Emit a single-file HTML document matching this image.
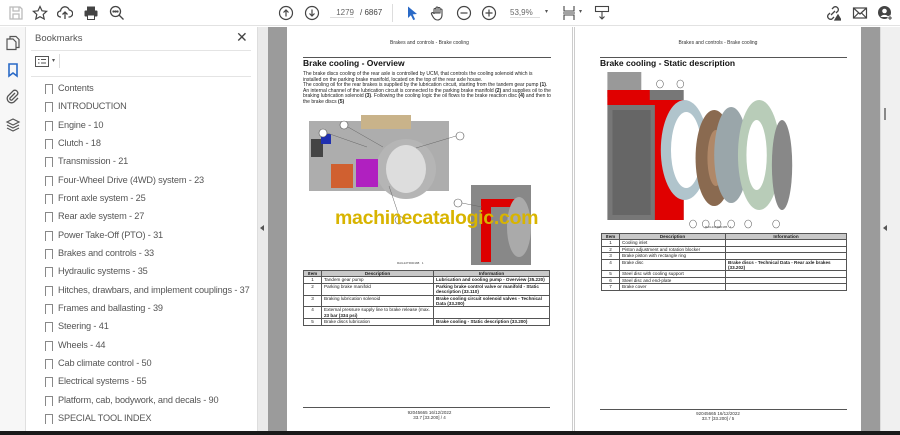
<!DOCTYPE html><html><head><meta charset="utf-8"><style>
*{margin:0;padding:0;box-sizing:border-box}
body{width:900px;height:435px;overflow:hidden;background:#fff;font-family:"Liberation Sans",sans-serif;position:relative}
.abs{position:absolute}
.tb{left:0;top:0;width:900px;height:26px;background:#fff;border-bottom:1px solid #e2e2e2}
.ic{position:absolute;top:5px;width:16px;height:16px}
.rail{left:0;top:27px;width:26px;height:404px;background:#f7f7f7;border-right:1px solid #e0e0e0}
.panel{left:26px;top:27px;width:231px;height:404px;background:#fff}
.bm{position:absolute;left:32px;font-size:9.2px;letter-spacing:-0.15px;color:#555;white-space:nowrap}
.bm:before{content:"";position:absolute;left:-13px;top:1px;width:6px;height:9px;border:1.3px solid #888;border-bottom:none;}
.page{background:#fff;top:27px;height:404px}
.hd{font-size:5px;color:#333;text-align:center;position:absolute;width:100%}
.t{font-size:5px;color:#222;line-height:5.6px}
table{border-collapse:collapse;font-size:4.6px;color:#222}
td,th{border:0.8px solid #555;padding:0 2px;vertical-align:top;line-height:5.4px}
th{background:#c8c8c8}
</style></head><body>
<div class="abs tb">
<svg class="ic" style="left:8px" viewBox="0 0 16 16" fill="none" stroke="#bbb" stroke-width="1.3"><path d="M2 2h10l2 2v10H2z M5 2v4h6V2 M5 14v-5h6v5"/></svg>
<svg class="ic" style="left:32px" viewBox="0 0 16 16" fill="none" stroke="#444" stroke-width="1.2"><path d="M8 1.5l2 4.3 4.6.5-3.4 3.1 1 4.6L8 11.7 3.8 14l1-4.6L1.4 6.3 6 5.8z"/></svg>
<svg class="ic" style="left:57px" viewBox="0 0 16 16" fill="none" stroke="#444" stroke-width="1.3"><path d="M4 12H3.5a3 3 0 0 1 0-6 4.5 4.5 0 0 1 8.8-1A3.5 3.5 0 0 1 12 12h-0.5 M8 14V7 M5.5 9.5L8 7l2.5 2.5"/></svg>
<svg class="ic" style="left:83px" viewBox="0 0 16 16" fill="#444"><rect x="4" y="1.5" width="8" height="4"/><rect x="1.5" y="5.5" width="13" height="6" rx="1"/><rect x="4.5" y="10" width="7" height="4.5" fill="#fff" stroke="#444"/></svg>
<svg class="ic" style="left:109px" viewBox="0 0 16 16" fill="none" stroke="#444" stroke-width="1.3"><circle cx="6.5" cy="6.5" r="5"/><path d="M10 10l4.5 4.5"/><circle cx="4.5" cy="6.5" r=".5"/><circle cx="6.5" cy="6.5" r=".5"/><circle cx="8.5" cy="6.5" r=".5"/></svg>
<svg class="ic" style="left:278px" viewBox="0 0 16 16" fill="none" stroke="#444" stroke-width="1.2"><circle cx="8" cy="8" r="6.5"/><path d="M8 11.5V5 M5.5 7.5L8 5l2.5 2.5"/></svg>
<svg class="ic" style="left:304px" viewBox="0 0 16 16" fill="none" stroke="#444" stroke-width="1.2"><circle cx="8" cy="8" r="6.5"/><path d="M8 4.5V11 M5.5 8.5L8 11l2.5-2.5"/></svg>
<div class="abs" style="left:330px;top:8px;width:24px;font-size:8px;color:#666;text-align:right;border-bottom:1px solid #ddd">1279</div>
<div class="abs" style="left:360px;top:8px;font-size:8px;color:#444">/ 6867</div>
<div class="abs" style="left:392px;top:4px;width:1px;height:18px;background:#ddd"></div>
<svg class="ic" style="left:404px" viewBox="0 0 16 16"><path d="M4 1.5l9 7.5-4.3.4 2.4 4.8-1.8.9-2.4-4.9L4 13z" fill="#2a6ac7"/></svg>
<svg class="ic" style="left:430px" viewBox="0 0 16 16" fill="none" stroke="#444" stroke-width="1.1"><path d="M4 9V4.5a1 1 0 0 1 2 0V8 M6 8V3a1 1 0 0 1 2 0v5 M8 8V3.5a1 1 0 0 1 2 0V8 M10 8V5a1 1 0 0 1 2 0v5c0 3-2 5-4.5 5S3.5 13 2.5 11l-1-2a1 1 0 0 1 1.7-1z"/></svg>
<svg class="ic" style="left:456px" viewBox="0 0 16 16" fill="none" stroke="#444" stroke-width="1.2"><circle cx="8" cy="8" r="6.5"/><path d="M4.5 8h7"/></svg>
<svg class="ic" style="left:481px" viewBox="0 0 16 16" fill="none" stroke="#444" stroke-width="1.2"><circle cx="8" cy="8" r="6.5"/><path d="M4.5 8h7 M8 4.5v7"/></svg>
<div class="abs" style="left:510px;top:8px;width:30px;font-size:8px;color:#666;border-bottom:1px solid #ddd">53,9%</div>
<div class="abs" style="left:545px;top:8px;font-size:6px;color:#555">▾</div>
<svg class="ic" style="left:562px" viewBox="0 0 16 16" fill="none" stroke="#444" stroke-width="1.1"><path d="M2 1v5h10V1 M2 15v-5h10v5 M1 8h12"/></svg>
<div class="abs" style="left:579px;top:8px;font-size:6px;color:#555">▾</div>
<svg class="ic" style="left:594px" viewBox="0 0 16 16" fill="none" stroke="#444" stroke-width="1.1"><rect x="1.5" y="1.5" width="13" height="5"/><path d="M8 7v7 M5.5 11.5L8 14l2.5-2.5"/></svg>
<svg class="ic" style="left:825px" viewBox="0 0 16 16" fill="none" stroke="#444" stroke-width="1.3"><path d="M6 10l4-4 M7 4l2-2a3 3 0 0 1 4 4l-2 2 M9 12l-2 2a3 3 0 0 1-4-4l2-2"/><path d="M10 15l3-5 3 5z" fill="#444"/></svg>
<svg class="ic" style="left:852px" viewBox="0 0 16 16" fill="none" stroke="#444" stroke-width="1.2"><rect x="1.5" y="3" width="13" height="10"/><path d="M1.5 3l6.5 6 6.5-6 M1.5 13l5-5 M14.5 13l-5-5"/></svg>
<svg class="ic" style="left:877px" viewBox="0 0 16 16"><circle cx="7.5" cy="7.5" r="6.5" fill="#444"/><circle cx="7.5" cy="6" r="2.3" fill="#fff"/><path d="M3.5 12a4.5 4 0 0 1 8 0" fill="#fff"/><circle cx="13" cy="13" r="2.5" fill="#fff"/><path d="M13 11v4M11 13h4" stroke="#444"/></svg>
</div>
<div class="abs rail">
<svg class="abs" style="left:5px;top:8px" width="16" height="16" viewBox="0 0 16 16" fill="none" stroke="#555" stroke-width="1.2"><path d="M5 4V1.5h6l3 3v8H11 M2 4h6l3 3v7.5H2z"/></svg>
<svg class="abs" style="left:5px;top:35px" width="16" height="16" viewBox="0 0 16 16" fill="none" stroke="#2a6ac7" stroke-width="1.6"><path d="M4 2h8v12l-4-3-4 3z"/></svg>
<svg class="abs" style="left:5px;top:62px" width="16" height="16" viewBox="0 0 16 16" fill="none" stroke="#555" stroke-width="1.3"><path d="M10 4L5 9a1.5 1.5 0 0 0 2 2l5.5-5.5a3 3 0 0 0-4-4L3 7a4.3 4.3 0 0 0 6 6l4-4"/></svg>
<svg class="abs" style="left:5px;top:90px" width="16" height="16" viewBox="0 0 16 16" fill="none" stroke="#555" stroke-width="1.2"><path d="M8 2l6 3-6 3-6-3z M2 8l6 3 6-3 M2 11l6 3 6-3"/></svg>
</div>
<div class="abs panel">
<div class="abs" style="left:9px;top:6px;font-size:9.5px;color:#555">Bookmarks</div>
<div class="abs" style="left:210px;top:2px;font-size:14px;color:#444">✕</div>
<div class="abs" style="left:5px;top:23px;width:220px;height:1px;background:#e4e4e4"></div>
<svg class="abs" style="left:9px;top:29px" width="14" height="11" viewBox="0 0 14 11" fill="none" stroke="#555"><rect x=".5" y=".5" width="13" height="10"/><path d="M3 3.5h1.5M6 3.5h5M3 7h1.5M6 7h5"/></svg>
<div class="abs" style="left:26px;top:30px;font-size:6px;color:#555">▾</div>
<div class="abs" style="left:33px;top:27px;width:1px;height:14px;background:#ddd"></div>
<div class="abs" style="left:5px;top:49px;width:220px;height:1px;background:#e4e4e4"></div>
<div class="bm" style="top:56px">Contents</div>
<div class="bm" style="top:74px">INTRODUCTION</div>
<div class="bm" style="top:92.5px">Engine - 10</div>
<div class="bm" style="top:111px">Clutch - 18</div>
<div class="bm" style="top:129px">Transmission - 21</div>
<div class="bm" style="top:147.5px">Four-Wheel Drive (4WD) system - 23</div>
<div class="bm" style="top:166px">Front axle system - 25</div>
<div class="bm" style="top:184px">Rear axle system - 27</div>
<div class="bm" style="top:202.5px">Power Take-Off (PTO) - 31</div>
<div class="bm" style="top:221px">Brakes and controls - 33</div>
<div class="bm" style="top:239px">Hydraulic systems - 35</div>
<div class="bm" style="top:257.5px">Hitches, drawbars, and implement couplings - 37</div>
<div class="bm" style="top:276px">Frames and ballasting - 39</div>
<div class="bm" style="top:294px">Steering - 41</div>
<div class="bm" style="top:312.5px">Wheels - 44</div>
<div class="bm" style="top:331px">Cab climate control - 50</div>
<div class="bm" style="top:349px">Electrical systems - 55</div>
<div class="bm" style="top:367.5px">Platform, cab, bodywork, and decals - 90</div>
<div class="bm" style="top:386px">SPECIAL TOOL INDEX</div>
</div>
<div class="abs" style="left:257px;top:27px;width:11px;height:404px;background:#eaeaea;border-left:1px solid #ddd"></div>
<div class="abs" style="left:260px;top:225px;width:0;height:0;border-right:4px solid #555;border-top:3px solid transparent;border-bottom:3px solid transparent"></div>
<div class="abs" style="left:268px;top:27px;width:19px;height:404px;background:#9b9b9b"></div>
<div class="abs" style="left:861px;top:27px;width:19px;height:404px;background:#9b9b9b"></div>
<div class="abs" style="left:880px;top:27px;width:20px;height:404px;background:#f0f0f0;border-left:1px solid #ddd"></div>
<div class="abs" style="left:883px;top:225px;width:0;height:0;border-right:4px solid #555;border-top:3px solid transparent;border-bottom:3px solid transparent"></div>
<div class="abs" style="left:884px;top:108px;width:1.5px;height:12px;background:#888"></div>

<!-- page 1 -->
<div class="abs page" style="left:287px;width:286px;border-right:1px solid #ccc">
<div class="hd" style="top:13px">Brakes and controls - Brake cooling</div>
<div class="abs" style="left:16px;top:30px;width:248px;height:1px;background:#555"></div>
<div class="abs" style="left:16px;top:31px;font-size:8.5px;font-weight:bold;color:#111">Brake cooling - Overview</div>
<div class="abs t" style="left:16px;top:45px;width:248px">The brake discs cooling of the rear axle is controlled by UCM, that controls the cooling solenoid which is installed on the parking brake manifold, located on the top of the rear axle house.<br>The cooling oil for the rear brakes is supplied by the lubrication circuit, starting from the tandem gear pump <b>(1)</b>. An internal channel of the lubrication circuit is connected to the parking brake manifold <b>(2)</b> and supplies oil to the braking lubrication solenoid <b>(3)</b>. Following the cooling logic the oil flows to the brake reaction disc <b>(4)</b> and then to the brake discs <b>(5)</b></div>
<svg class="abs" style="left:14px;top:82px" width="256" height="160" viewBox="0 0 256 160">
<rect x="8" y="12" width="140" height="70" fill="#8a8a8a" opacity=".7"/>
<rect x="60" y="6" width="50" height="14" fill="#c9b38a"/>
<ellipse cx="105" cy="60" rx="30" ry="30" fill="#b5b5b5"/><ellipse cx="105" cy="60" rx="20" ry="24" fill="#ddd"/>
<rect x="55" y="50" width="22" height="28" fill="#b020c0"/>
<rect x="30" y="55" width="22" height="24" fill="#d06030"/>
<rect x="10" y="30" width="12" height="18" fill="#444"/>
<rect x="20" y="25" width="10" height="10" fill="#2030b0"/>
<rect x="170" y="76" width="60" height="80" fill="#888"/>
<path d="M180 90h40v8h-30v55h-10z" fill="#d00"/>
<ellipse cx="218" cy="118" rx="12" ry="30" fill="#aaa"/>
<g fill="#fff" stroke="#555" stroke-width=".6"><circle cx="22" cy="24" r="4"/><circle cx="43" cy="16" r="4"/><circle cx="159" cy="27" r="4"/><circle cx="157" cy="94" r="4"/><circle cx="98" cy="111" r="4"/></g>
<g stroke="#666" stroke-width=".5"><path d="M26 24l40 14M47 18l35 20M155 27l-40 12M161 94l20 4M98 107l-10-30"/></g>
</svg>
<div class="abs" style="left:48px;top:180px;font-size:19.5px;font-weight:bold;color:#d8b400;letter-spacing:-.3px">machinecatalogic.com</div>
<div class="abs" style="left:110px;top:234px;font-size:3px;color:#444">RAIL22TR00188 &nbsp; 1</div>
<table class="abs" style="left:16px;top:243px;width:247px">
<tr><th style="width:18px">Item</th><th style="width:112px">Description</th><th>Information</th></tr>
<tr><td style="text-align:center">1</td><td>Tandem gear pump</td><td><b>Lubrication and cooling pump - Overview (35.220)</b></td></tr>
<tr><td style="text-align:center">2</td><td>Parking brake manifold</td><td><b>Parking brake control valve or manifold - Static description (33.110)</b></td></tr>
<tr><td style="text-align:center">3</td><td>Braking lubrication solenoid</td><td><b>Brake cooling circuit solenoid valves - Technical Data (33.200)</b></td></tr>
<tr><td style="text-align:center">4</td><td>External pressure supply line to brake release (max. <b>23 bar (334 psi)</b></td><td></td></tr>
<tr><td style="text-align:center">5</td><td>Brake discs lubrication</td><td><b>Brake cooling - Static description (33.200)</b></td></tr>
</table>
<div class="abs" style="left:16px;top:380px;width:247px;height:1px;background:#555"></div>
<div class="hd" style="top:383px;font-size:4.5px">92045665 16/12/2022<br>33.7 [33.200] / 4</div>
</div>

<!-- page 2 -->
<div class="abs page" style="left:574px;width:287px;border-left:1px solid #ccc">
<div class="hd" style="top:13px">Brakes and controls - Brake cooling</div>
<div class="abs" style="left:25px;top:30px;width:247px;height:1px;background:#555"></div>
<div class="abs" style="left:25px;top:31px;font-size:8.5px;font-weight:bold;color:#111">Brake cooling - Static description</div>
<svg class="abs" style="left:29px;top:43px" width="195" height="160" viewBox="0 0 230 160" preserveAspectRatio="none">
<rect x="4" y="2" width="40" height="25" fill="#999"/>
<rect x="4" y="20" width="90" height="130" fill="#777"/>
<path d="M4 20h50v10h40v120H60V35H4z" fill="#e00000"/>
<rect x="10" y="40" width="45" height="105" fill="#666"/>
<ellipse cx="95" cy="80" rx="28" ry="50" fill="#b0c4cc"/><ellipse cx="97" cy="80" rx="18" ry="38" fill="#fff"/>
<ellipse cx="130" cy="88" rx="22" ry="48" fill="#8a6a50"/><ellipse cx="132" cy="88" rx="10" ry="28" fill="#b08868"/>
<ellipse cx="150" cy="85" rx="20" ry="48" fill="#9aa6aa"/>
<ellipse cx="183" cy="85" rx="25" ry="55" fill="#b8ccb8"/><ellipse cx="180" cy="85" rx="12" ry="35" fill="#fff"/>
<ellipse cx="210" cy="95" rx="12" ry="45" fill="#888"/>
<g fill="#fff" stroke="#555" stroke-width=".6"><circle cx="66" cy="14" r="4"/><circle cx="90" cy="14" r="4"/><circle cx="105" cy="154" r="4"/><circle cx="120" cy="154" r="4"/><circle cx="134" cy="154" r="4"/><circle cx="150" cy="154" r="4"/><circle cx="170" cy="154" r="4"/><circle cx="203" cy="154" r="4"/></g>
</svg>
<div class="abs" style="left:130px;top:198px;font-size:3px;color:#444">RAIL22TR00185 &nbsp; 1</div>
<table class="abs" style="left:26px;top:206px;width:246px">
<tr><th style="width:18px">Item</th><th style="width:106px">Description</th><th>Information</th></tr>
<tr><td style="text-align:center">1</td><td>Cooling inlet</td><td></td></tr>
<tr><td style="text-align:center">2</td><td>Piston adjustment and rotation blocker</td><td></td></tr>
<tr><td style="text-align:center">3</td><td>Brake piston with rectangle ring</td><td></td></tr>
<tr><td style="text-align:center">4</td><td>Brake disc</td><td><b>Brake discs - Technical Data - Rear axle brakes (33.202)</b></td></tr>
<tr><td style="text-align:center">5</td><td>Steel disc with cooling support</td><td></td></tr>
<tr><td style="text-align:center">6</td><td>Steel disc and end-plate</td><td></td></tr>
<tr><td style="text-align:center">7</td><td>Brake cover</td><td></td></tr>
</table>
<div class="abs" style="left:25px;top:382px;width:247px;height:1px;background:#555"></div>
<div class="hd" style="top:384px;font-size:4.5px">92045665 16/12/2022<br>33.7 [33.200] / 5</div>
</div>
<div class="abs" style="left:0;top:431px;width:900px;height:4px;background:#1a1a1a"></div>
</body></html>
